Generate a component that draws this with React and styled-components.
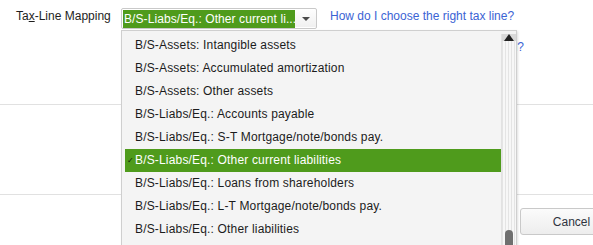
import React from "react";
import styled, { createGlobalStyle } from "styled-components";

const Global = createGlobalStyle`
  html, body { margin: 0; padding: 0; background: #fff; }
  body { font-family: "Liberation Sans", Arial, sans-serif; font-size: 12px; color: #222; }
`;

const Page = styled.div`
  position: relative;
  width: 593px;
  height: 245px;
  overflow: hidden;
  background: #fff;
  display: flex;
  flex-direction: column;
`;

const Header = styled.div`
  height: 105px;
  box-sizing: border-box;
  border-bottom: 1px solid #e1e1e1;
  padding-top: 8px;
`;

const FieldRow = styled.div`
  display: flex;
  align-items: flex-start;
`;

const Label = styled.label`
  width: 105px;
  margin-left: 16px;
  margin-top: 1px;
  line-height: 14px;
  color: #1e1e1e;
  white-space: nowrap;
  u { text-decoration: underline; }
`;

const Select = styled.div`
  width: 196px;
  height: 21px;
  box-sizing: border-box;
  border: 1px solid #c9c9c9;
  border-radius: 2px;
  background: #fff;
  display: flex;
  padding: 1px 0 1px 1px;
`;

const SelectValue = styled.div`
  width: 172px;
  height: 18px;
  line-height: 18px;
  background: #4f9b1c;
  color: #fff;
  padding-left: 1px;
  box-sizing: border-box;
  white-space: nowrap;
  overflow: hidden;
  letter-spacing: 0.08px;
`;

const ArrowBox = styled.div`
  flex: 1;
  display: flex;
  align-items: center;
  justify-content: center;
  background: linear-gradient(#fdfdfd, #f0f0f0);
`;

const Caret = styled.span`
  width: 0;
  height: 0;
  border-left: 4px solid transparent;
  border-right: 4px solid transparent;
  border-top: 4px solid #4a4a4a;
  margin-left: 1px;
`;

const HelpLink = styled.a`
  color: #3b63d4;
  text-decoration: none;
  line-height: 14px;
  white-space: nowrap;
  margin: ${(p) => p.$m || "0"};
`;

const SecondRow = styled.div`
  display: flex;
  justify-content: flex-end;
  padding-right: 69px;
  margin-top: 11px;
`;

const Middle = styled.div`
  height: 90px;
  box-sizing: border-box;
  border-bottom: 1px solid #e1e1e1;
`;

const Footer = styled.div`
  display: flex;
  justify-content: flex-end;
  padding-top: 13px;
  margin-right: -28px;
`;

const Button = styled.button`
  width: 101px;
  height: 27px;
  box-sizing: border-box;
  border: 1px solid #c9c9c9;
  border-radius: 3px;
  background: linear-gradient(#fbfbfb, #ededed);
  font-family: "Liberation Sans", Arial, sans-serif;
  font-size: 12px;
  color: #2f3440;
  padding: 0 0 0 2px;
`;

const Dropdown = styled.div`
  position: absolute;
  left: 121px;
  top: 30px;
  width: 396px;
  height: 230px;
  box-sizing: border-box;
  border: 1px solid #cfcfcf;
  background: #f4f4f4;
  box-shadow: 1px 1px 2px rgba(0, 0, 0, 0.12);
  display: flex;
  padding: 3px 0 0 3px;
`;

const List = styled.ul`
  list-style: none;
  margin: 0;
  padding: 0;
  width: 376px;
`;

const Item = styled.li`
  height: 23px;
  line-height: 23px;
  display: flex;
  white-space: nowrap;
  letter-spacing: 0.17px;
  color: ${(p) => (p.$selected ? "#fff" : "#1c1c1c")};
  background: ${(p) => (p.$selected ? "#4f9b1c" : "transparent")};
`;

const Check = styled.span`
  width: 10px;
  text-align: center;
  font-family: "DejaVu Sans", sans-serif;
  font-size: 8px;
  color: #10200a;
  padding-left: 1px;
  box-sizing: border-box;
`;

const Scrollbar = styled.div`
  width: 15px;
  display: flex;
  flex-direction: column;
  box-sizing: border-box;
  border-left: 1px solid #e2e2e2;
`;

const ScrollButton = styled.div`
  height: 14px;
  background: #d9d9d9;
  display: flex;
  align-items: center;
  justify-content: center;
`;

const UpTriangle = styled.span`
  width: 0;
  height: 0;
  border-left: 5px solid transparent;
  border-right: 5px solid transparent;
  border-bottom: 7px solid #222;
`;

const Track = styled.div`
  flex: 1;
  background: repeating-linear-gradient(90deg, #e4e4e4 0 1px, #f7f7f7 1px 3px);
  display: flex;
  justify-content: center;
`;

const Thumb = styled.div`
  width: 8px;
  height: 30px;
  margin-top: 189px;
  border-radius: 4px;
  background: #6f6f6f;
`;

const items = [
  "B/S-Assets: Intangible assets",
  "B/S-Assets: Accumulated amortization",
  "B/S-Assets: Other assets",
  "B/S-Liabs/Eq.: Accounts payable",
  "B/S-Liabs/Eq.: S-T Mortgage/note/bonds pay.",
  "B/S-Liabs/Eq.: Other current liabilities",
  "B/S-Liabs/Eq.: Loans from shareholders",
  "B/S-Liabs/Eq.: L-T Mortgage/note/bonds pay.",
  "B/S-Liabs/Eq.: Other liabilities",
];

export default function App() {
  return (
    <>
      <Global />
      <Page>
        <Header>
          <FieldRow>
            <Label>
              Ta<u>x</u>-Line Mapping
            </Label>
            <Select>
              <SelectValue>B/S-Liabs/Eq.: Other current li...</SelectValue>
              <ArrowBox>
                <Caret />
              </ArrowBox>
            </Select>
            <HelpLink $m="1px 0 0 13px">How do I choose the right tax line?</HelpLink>
          </FieldRow>
          <SecondRow>
            <HelpLink>Why don't I see the tax line I need?</HelpLink>
          </SecondRow>
        </Header>
        <Middle />
        <Footer>
          <Button>Cancel</Button>
        </Footer>
        <Dropdown>
          <List>
            {items.map((t, i) => (
              <Item key={t} $selected={i === 5}>
                <Check>{i === 5 ? "✓" : ""}</Check>
                {t}
              </Item>
            ))}
          </List>
          <Scrollbar>
            <ScrollButton>
              <UpTriangle />
            </ScrollButton>
            <Track>
              <Thumb />
            </Track>
          </Scrollbar>
        </Dropdown>
      </Page>
    </>
  );
}
